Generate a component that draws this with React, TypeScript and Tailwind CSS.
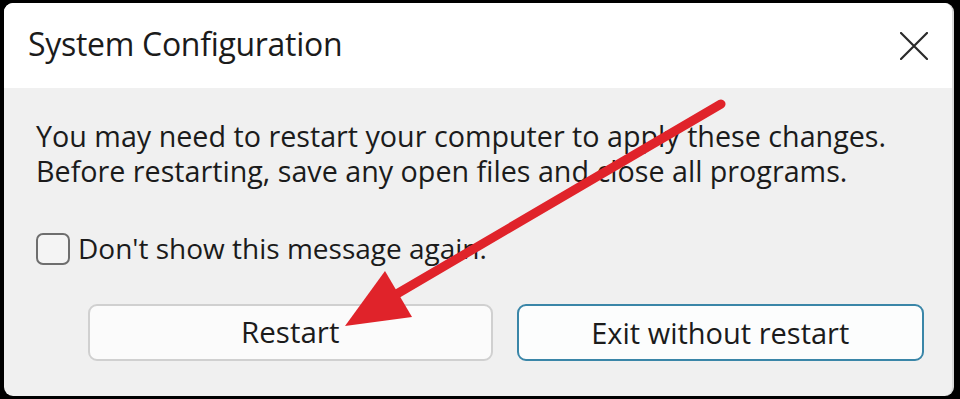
import React from "react";

const font = { fontFamily: '"Open Sans", "Noto Sans", sans-serif' };

export default function App() {
  return (
    <div
      className="relative w-[960px] h-[399px] bg-black pt-[3px] pl-[4px] pr-[6px] pb-[3px] overflow-hidden text-[#1b1b1b]"
      style={font}
    >
      <div className="flex flex-col w-full h-full bg-[#f0f0f0] rounded-[9px] overflow-hidden border-r-2 border-[#d8d8d8]">
        <header className="flex-shrink-0 h-[85px] bg-white flex flex-row items-center pl-[24px] pr-[23px]">
          <div className="text-[32px] tracking-[-0.3px] leading-none pb-[4px]">System Configuration</div>
          <button className="ml-auto w-[30px] h-[30px] flex items-center justify-center">
            <svg width="28" height="28" viewBox="0 0 28 28">
              <path d="M1 1 L27 27 M27 1 L1 27" stroke="#2a2a2a" strokeWidth="2.2" strokeLinecap="round" />
            </svg>
          </button>
        </header>
        <main className="flex-1 flex flex-col pl-[32px] pr-[28px]">
          <p className="mt-[30px] text-[28.7px] leading-[35px]">
            You may need to restart your computer to apply these changes.
            <br />
            Before restarting, save any open files and close all programs.
          </p>
          <label className="mt-[45px] flex flex-row items-center gap-[8px] text-[28px] leading-none">
            <span className="w-[34px] h-[32px] rounded-[7px] border-[2.5px] border-[#6e6e6e] bg-[#f4f4f4]" />
            <span className="pb-[2px]">Don't show this message again.</span>
          </label>
          <div className="mt-[39px] flex flex-row gap-[24px] pl-[52px]">
            <button className="w-[405px] h-[57px] rounded-[9px] border-2 border-[#d0d0d0] bg-[#fbfbfb] text-[29.5px]">
              Restart
            </button>
            <button className="w-[408px] h-[57px] rounded-[9px] border-[2.5px] border-[#3a86a8] bg-[#fcfdfd] text-[29px]">
              Exit without restart
            </button>
          </div>
        </main>
      </div>
      <svg className="absolute left-0 top-0 pointer-events-none" width="960" height="399" viewBox="0 0 960 399">
        <line x1="721" y1="104" x2="395" y2="295" stroke="#e0232a" strokeWidth="9" strokeLinecap="round" />
        <polygon points="345,326 385,271 412,317" fill="#e0232a" />
      </svg>
    </div>
  );
}
